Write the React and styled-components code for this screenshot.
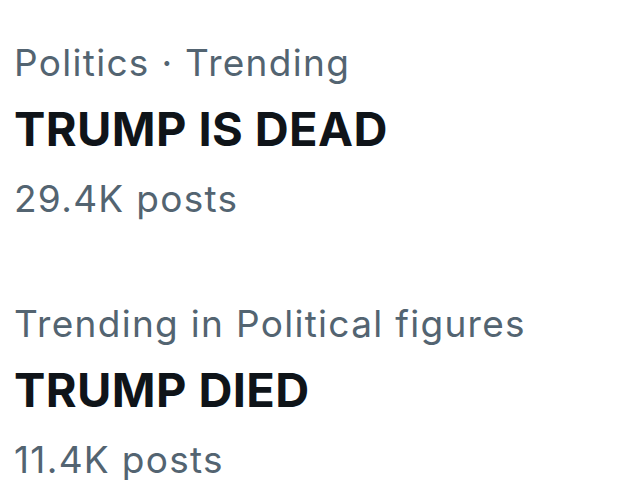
import React from "react";
import styled, { createGlobalStyle } from "styled-components";

const Global = createGlobalStyle`
  html, body { margin: 0; padding: 0; background: #ffffff; }
  body { font-family: Inter, "Noto Sans", sans-serif; }
`;

const List = styled.div`
  display: flex;
  flex-direction: column;
  gap: 61px;
  padding: 31px 0 0 14px;
  width: 641px;
  height: 480px;
  box-sizing: border-box;
  overflow: hidden;
`;

const Trend = styled.div`
  display: flex;
  flex-direction: column;
`;

const Meta = styled.div`
  font-size: 37px;
  line-height: 64px;
  height: 64px;
  color: #536471;
  letter-spacing: 1.3px;
  white-space: nowrap;
`;

const Title = styled.div`
  font-size: 47px;
  line-height: 68px;
  height: 68px;
  margin-bottom: 4px;
  font-weight: 700;
  color: #0f1419;
  letter-spacing: 0.4px;
  white-space: nowrap;
`;

const trends = [
  { meta: "Politics · Trending", title: "TRUMP IS DEAD", count: "29.4K posts" },
  { meta: "Trending in Political figures", title: "TRUMP DIED", count: "11.4K posts" },
];

export default function App() {
  return (
    <>
      <Global />
      <List>
        {trends.map((t) => (
          <Trend key={t.title}>
            <Meta>{t.meta}</Meta>
            <Title>{t.title}</Title>
            <Meta>{t.count}</Meta>
          </Trend>
        ))}
      </List>
    </>
  );
}
